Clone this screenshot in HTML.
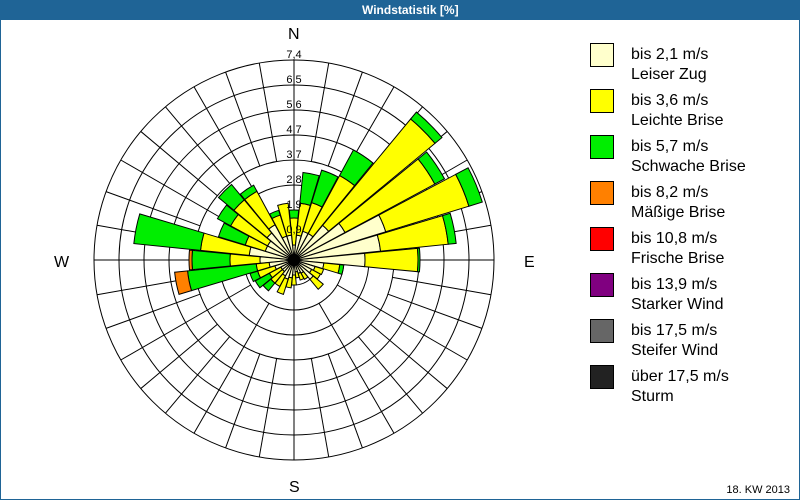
<!DOCTYPE html>
<html><head><meta charset="utf-8"><style>
html,body{margin:0;padding:0;}
body{width:800px;height:500px;position:relative;overflow:hidden;background:#fff;font-family:"Liberation Sans","DejaVu Sans",sans-serif;}
.frame{position:absolute;left:0;top:0;width:798px;height:498px;border:1px solid #1f6496;}
.hdr{position:absolute;left:0;top:0;width:800px;height:20px;background:#1f6496;color:#fff;font-weight:bold;font-size:12px;line-height:20px;text-align:center;}
.hdr span{position:absolute;left:362px;top:0;}
.lg{position:absolute;left:590px;width:22px;height:22px;border:1px solid #000;}
.lt{position:absolute;left:631px;font-size:16px;line-height:20px;color:#000;white-space:nowrap;}
.lbl{position:absolute;font-size:16px;color:#000;}
.kw{position:absolute;right:10px;top:484px;font-size:11px;}
</style></head><body>
<div class="frame"></div>
<div class="hdr"><span>Windstatistik [%]</span></div>
<svg id="s" width="800" height="500" style="position:absolute;left:0;top:0" xmlns="http://www.w3.org/2000/svg">
<g id="grid" stroke="#000" stroke-width="1" fill="none"></g>
<g id="bars" stroke="#000" stroke-width="1"></g>
<circle cx="294" cy="260" r="6" fill="#000"/>
<g font-family="Liberation Sans, sans-serif" font-size="11" fill="#000" text-anchor="middle">
<text x="294" y="58">7,4</text><text x="294" y="83">6,5</text><text x="294" y="108">5,6</text>
<text x="294" y="133">4,7</text><text x="294" y="158">3,7</text><text x="294" y="183">2,8</text>
<text x="294" y="208">1,9</text><text x="294" y="233">0,9</text>
</g>
</svg>
<div class="lbl" style="left:288px;top:26px">N</div>
<div class="lbl" style="left:54px;top:254px">W</div>
<div class="lbl" style="left:524px;top:254px">E</div>
<div class="lbl" style="left:289px;top:479px">S</div>

<div class="lg" style="top:43px;background:#ffffcc"></div><div class="lt" style="top:45px">bis 2,1 m/s<br>Leiser Zug</div>
<div class="lg" style="top:89px;background:#ffff00"></div><div class="lt" style="top:91px">bis 3,6 m/s<br>Leichte Brise</div>
<div class="lg" style="top:135px;background:#00ee00"></div><div class="lt" style="top:137px">bis 5,7 m/s<br>Schwache Brise</div>
<div class="lg" style="top:181px;background:#ff8000"></div><div class="lt" style="top:183px">bis 8,2 m/s<br>Mäßige Brise</div>
<div class="lg" style="top:227px;background:#ff0000"></div><div class="lt" style="top:229px">bis 10,8 m/s<br>Frische Brise</div>
<div class="lg" style="top:273px;background:#800080"></div><div class="lt" style="top:275px">bis 13,9 m/s<br>Starker Wind</div>
<div class="lg" style="top:319px;background:#666666"></div><div class="lt" style="top:321px">bis 17,5 m/s<br>Steifer Wind</div>
<div class="lg" style="top:365px;background:#222222"></div><div class="lt" style="top:367px">über 17,5 m/s<br>Sturm</div>
<div class="kw">18. KW 2013</div>
<script>
var cx=294,cy=260,NS="http://www.w3.org/2000/svg";
var g=document.getElementById("grid"),b=document.getElementById("bars");
function el(p,t,a){var e=document.createElementNS(NS,t);for(var k in a)e.setAttribute(k,a[k]);p.appendChild(e);return e;}
function pt(r,deg){var a=deg*Math.PI/180;return [cx+r*Math.sin(a),cy-r*Math.cos(a)];}
for(var k=1;k<=8;k++)el(g,"circle",{cx:cx,cy:cy,r:25*k});
for(var d=0;d<360;d+=10){var r0=d%90==0?0:(d%30==0?50:100);var p=pt(r0,d),q=pt(200,d);el(g,"line",{x1:p[0],y1:p[1],x2:q[0],y2:q[1]});}
var cols=["#ffffcc","#ffff00","#00ee00","#ff8000"];
var data={0:[15,42,50],11.25:[25,57,88],22.5:[30,60,94],33.75:[30,96,125],45:[45,183,192],56.25:[58,160,171],67.5:[96,183,197],78.75:[87,155,163],90:[71,124,126],101.25:[30,46,50],112.5:[22,31],123.75:[20,30],135:[25,38],146.25:[15,22],157.5:[14,21],168.75:[12,18],180:[15,25],191.25:[18,28],202.5:[20,36],213.75:[18,30],225:[15,30,40],236.25:[15,28,44],247.5:[20,38,46],258.75:[25,38,107,120],270:[34,64,102,105],281.25:[45,94,161],292.5:[30,51,79],303.75:[30,72,87],315:[35,78,98],326.25:[40,78,85],337.5:[25,47,52],348.75:[25,57]};
var hw=5.4;
for(var key in data){var a=parseFloat(key),v=data[key],prev=0;
for(var i=0;i<v.length;i++){var r1=prev,r2=v[i];
var p1=pt(r1,a-hw),p2=pt(r2,a-hw),p3=pt(r2,a+hw),p4=pt(r1,a+hw);
var dd="M"+p1+" L"+p2+" A"+r2+" "+r2+" 0 0 1 "+p3+" L"+p4+(r1>0?" A"+r1+" "+r1+" 0 0 0 "+p1:"")+"Z";
el(b,"path",{d:dd,fill:cols[i]});prev=r2;}}
</script>
</body></html>
